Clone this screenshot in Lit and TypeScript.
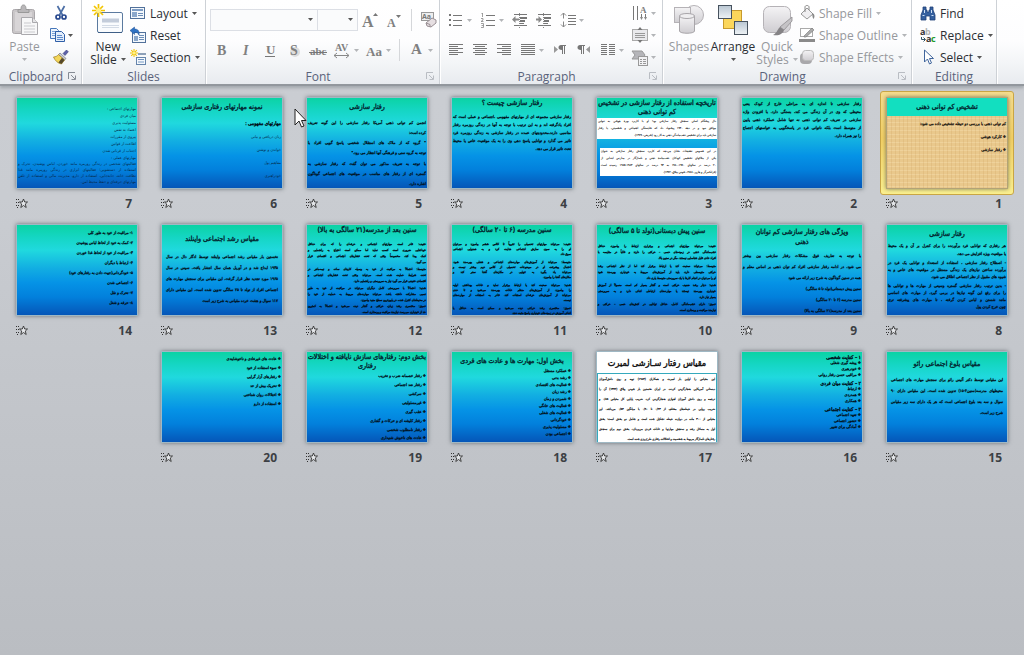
import { LitElement, html, svg, css, nothing, TemplateResult } from "lit";
import { customElement, property } from "lit/decorators.js";

interface Block {
  cls: string;
  lines: string[];
}
interface Slide {
  n: number;
  look?: string;
  blocks: Block[];
}

/* Class words: title / body, hN = line height, tN = space above,
   fill = every line but the last spans the slide. */
const SLIDES: Slide[] = [
  { n: 1, look: "sand", blocks: [
    { cls: "title banner h18", lines: ["تشخیص کم توانی ذهنی"] },
    { cls: "body bold t1 h13", lines: ["کم توانی ذهنی با بررسی دو حیطه تشخیص داده می شود:", "❖ کارکرد هوشی", "❖ رفتار سازشی"] },
  ] },
  { n: 2, blocks: [
    { cls: "body bold t2 h8 fill", lines: ["رفتار سازشی تا اندازه ای به مراحلی خارج از کودک یعنی", "محیطی که وی در آن زندگی می کند، بستگی دارد. با افزودن واژه", "سازشی در تعریف کم توانی ذهنی نه تنها شامل عملکرد ذهنی پایین", "از متوسط است بلکه ناتوانی فرد در پاسخگویی به خواستهای اجتماع", "را نیز همراه دارد."] },
  ] },
  { n: 3, blocks: [
    { cls: "title t1 h9", lines: ["تاریخچه استفاده از رفتار سازشی در تشخیص", "کم توانی ذهنی"] },
    { cls: "body paper t1 h7 fill", lines: ["دال پیشگام اصلی سنجش رفتار سازشی بود؛ او با کاربرد بهرۀ هوشی به تنهایی", "موافق نبود و در دهۀ ۱۹۴۰ پیشنهاد داد که شایستگی اجتماعی و شخصیتی، یا رفتار", "سازشی باید برای تشخیص عقب‌ماندگی ذهنی به کار رود (شریفی، ۱۳۷۹)."] },
    { cls: "body paper inset t9 h7 fill", lines: ["در این خصوص تحقیقات نشان می‌دهد که کاربرد سنجش رفتار سازشی به عنوان", "یکی از ملاکهای تشخیص کودکان عقب‌ماندۀ ذهنی و ناسازگار در مدارس ابتدایی از", "۲۰ درصد در سالهای ۱۹۷۰-۱۹۸۰ به ۹۴ درصد در سالهای ۱۹۸۴-۱۹۸۵ رسیده است", "(فرانکنبرگر و هارپر، ۱۹۸۸، شهنی ییلاق، ۱۳۷۲)."] },
  ] },
  { n: 4, blocks: [
    { cls: "title h10", lines: ["رفتار سازشی چیست ؟"] },
    { cls: "body bold t5 h8 fill", lines: ["رفتار سازشی مجموعه ای از مهارتهای مفهومی ،اجتماعی و عملی است که", "افراد یادگرفته اند و به این ترتیب با توجه به آنها در زندگی روزمره رفتار", "مناسبی دارند.محدودیتهای عمده در رفتار سازشی به زندگی روزمره فرد", "تاثیر می گذارد و توانایی پاسخ دهی وی را به یک موقعیت خاص یا محیط", "تحت تاثیر قرار می دهد."] },
  ] },
  { n: 5, blocks: [
    { cls: "title t4 h10", lines: ["رفتار سازشی"] },
    { cls: "body bold t6 h10 fill", lines: ["انجمن کم توانی ذهنی آمریکا رفتار سازشی را این گونه تعریف", "کرده است:"] },
    { cls: "body bold h10 fill", lines: ["\" گروه که از ملاک های استقلال شخصی پاسخ گویی افراد با", "توجه به گروه سنی و فرهنگی آنها انتظار می رود.\""] },
    { cls: "body bold t1 h10 fill", lines: ["با توجه به تعریف مذکور می توان گفت که رفتار سازشی به", "گستره ای از رفتار های مناسب در موقعیت های اجتماعی گوناگون", "اشاره دارد."] },
  ] },
  { n: 6, blocks: [
    { cls: "title t4 h10", lines: ["نمونه مهارتهای رفتاری سازشی"] },
    { cls: "body lead t5 h13", lines: ["مهارتهای مفهومی :"] },
    { cls: "body thin h13", lines: ["زبان دریافتی و بیانی", "خواندن و نوشتن", "مفاهیم پول", "خودراهبری"] },
  ] },
  { n: 7, blocks: [
    { cls: "body thin t7 h7", lines: ["مهارتهای اجتماعی :", "میان فردی", "مسئولیت پذیری", "اعتماد به نفس", "پیروی از مقررات", "اطاعت از قوانین", "اجتناب از قربانی شدن", "مهارتهای عملی :"] },
    { cls: "body thin h6 fill", lines: ["فعالیتهای شخصی در زندگی روزمره مانند خوردن، لباس پوشیدن، تحرک و", "استفاده از دستشویی؛ فعالیتهای ابزاری در زندگی روزمره مانند غذا", "نظافت خانه، جابه‌جایی، استفاده از دارو، مدیریت مالی و استفاده از تلفن", "مهارتهای حرفه‌ای و حفظ محیط امن."] },
  ] },
  { n: 8, blocks: [
    { cls: "title t4 h10", lines: ["رفتار سازشی"] },
    { cls: "body bold t3 h8 fill", lines: ["هر رفتاری که توانایی فرد برآورنده را برای کنترل بر آن و یک محیط", "یا موقعیت ویژه افزایش می دهد."] },
    { cls: "body bold t1 h7 fill", lines: ["- اصطلاح رفتار سازشی ، استفاده از استعداد و توانایی یک فرد در", "برآورده ساختن نیازهای یک زندگی مستقل در موقعیت های خاص و به", "شیوه های مقبول از نظر اجتماعی اطلاق می شود."] },
    { cls: "body bold t2 h7 fill", lines: ["- بدین ترتیب رفتار سازشی گستره وسیعی از مهارت ها و توانایی ها", "را برای رفع این گونه نیازها در برمی گیرد. از مهارت های اساسی", "مانند شستن و لباس کردن گرفته ، تا مهارت های پیشرفته تری", "چون خرج کردن پول"] },
  ] },
  { n: 9, blocks: [
    { cls: "title t2 h10", lines: ["ویژگی های رفتار سازشی کم توانان", "ذهنی"] },
    { cls: "body bold t3 h11 fill", lines: ["با توجه به تعاریف فوق مشکلات رفتار سازشی بین بیشتر", "می شود. در ادامه رفتار سازشی افراد کم توان ذهنی بر اساس معلم و", "همه در سنین گوناگون به شرح زیر ارائه می شود"] },
    { cls: "body bold h11", lines: ["سنین پیش دبستانی(تولد تا ۵ سالگی)", "سنین مدرسه (۶ تا ۲۰ سالگی)", "سنین بعد از مدرسه(۲۱ سالگی به بالا)"] },
  ] },
  { n: 10, blocks: [
    { cls: "title t1 h10", lines: ["سنین پیش دبستانی(تولد تا ۵ سالگی)"] },
    { cls: "body dense t7 h6 fill", lines: ["خفیف: می‌تواند مهارتهای اجتماعی و برقراری ارتباط را بیاموزد، حداقل", "عقب‌ماندگی ذهنی در زمینه‌های حسی – حرکتی را دارند و غالباً در مقایسه با", "افراد عادی قابل شناسایی نیستند. مگر در سنین بالا."] },
    { cls: "body dense t2 h6 fill", lines: ["متوسط: می‌تواند صحبت کند یا ارتباط برقرار کند اما از نظر اجتماعی رشد", "حرکتی متوسطی دارد، باید از آموزش‌های مربوط به خودیاری بهره‌مند شود", "او را می‌توان در انجام کارها با یک سرپرستی متوسط یاری داد."] },
    { cls: "body dense t1 h6 fill", lines: ["شدید: دچار رشد ضعیف حرکتی است و گفتار بسیار کم است. معمولاً از آموزش", "خودیاری بهره‌مند نیستند یا مهارت‌های ارتباطی اندکی دارد و به سرپرستی", "بسیار نیاز دارد."] },
    { cls: "body dense t1 h6 fill", lines: ["عمیق: دارای عقب‌ماندگی کامل، حداقل توانایی در کنش‌های حسی – حرکتی و", "نیازمند مراقبت و پرستاری است."] },
  ] },
  { n: 11, blocks: [
    { cls: "title h10", lines: ["سنین مدرسه (۶ تا ۲۰ سالگی)"] },
    { cls: "body dense t7 h5 fill", lines: ["خفیف: می‌تواند مهارتهای تحصیلی را تقریباً تا کلاس ششم بیاموزد و می‌توان", "او را به سوی سازش اجتماعی هدایت کرد و به همنوایی اجتماعی", "سوق داد."] },
    { cls: "body dense t3 h5 fill", lines: ["متوسط: می‌تواند از آموزش‌های مهارت‌های اجتماعی و شغلی بهره‌مند شود.", "احتمال پیشرفت او در موضوعات تحصیلی از کلاس دوم بیشتر نیست و", "می‌تواند یاد بگیرد به تنهایی در مکان‌های آشنا سفر کند و", "مکان‌های آشنا را بیاموزد."] },
    { cls: "body dense t3 h5 fill", lines: ["شدید: می‌تواند صحبت کند یا ارتباط برقرار نماید و عادات بهداشتی اولیه", "را بیاموزد. از آموزش‌های منظم عادات بهره‌مند می‌شود و تا حدی", "می‌تواند از آموزش‌های حرفه‌ای استفاده کند. قادر به استفاده از مهارت‌های", "نیست."] },
    { cls: "body dense t3 h5 fill", lines: ["عمیق: مختصری رشد حرکتی دیده می‌شود و ممکن است به حداقل یا", "اندکی آموزش در زمینه‌های خودیاری پاسخ مثبت دهد."] },
  ] },
  { n: 12, blocks: [
    { cls: "title h10", lines: ["سنین بعد از مدرسه(۲۱ سالگی به بالا)"] },
    { cls: "body dense t6 h6 fill", lines: ["خفیف: قادر است مهارتهای اجتماعی و حرفه‌ای را که برای حداقل", "خودکفایی ضروری است کسب نماید اما ممکن است احتیاج به راهنمایی و", "کمک پیدا کند، مخصوصاً وقتی که تحت فشارهای اجتماعی و اقتصادی قرار", "می گیرد."] },
    { cls: "body dense t1 h6 fill", lines: ["متوسط: احتمالاً به مراقبت از خود به وسیله کارهای ساده و نیمه‌ماهر در", "تحت شرایط حمایت شده است. می‌تواند وقتی تحت فشارهای اجتماعی و", "اقتصادی خفیفی قرار می گیرد نیاز به سرپرستی و راهنمایی دارد."] },
    { cls: "body dense t1 h6 fill", lines: ["شدید: احتمالاً با سرپرستی کامل دیگران می‌تواند در مراقبت از خود به طور", "نسبی مشارکت داشته باشد. می‌تواند مهارت‌های مربوط به حمایت از خود را", "در محیط‌های کنترل شده، در پایین‌ترین سطح مفید بیاموزد."] },
    { cls: "body dense h6 fill", lines: ["عمیق: مختصری رشد زبان، حرکتی و گفتار دیده می‌شود و احتمالاً به کمترین", "حد از خودیاری می‌رسد. نیازمند مراقبت و پرستاری است."] },
  ] },
  { n: 13, blocks: [
    { cls: "title t9 h10", lines: ["مقیاس رشد اجتماعی واینلند"] },
    { cls: "body bold narrow t7 h11 fill", lines: ["نخستین بار مقیاس رشد اجتماعی واینلند توسط ادگار دال در سال", "۱۹۳۵ ابداع شد و در آوریل همان سال انتشار یافت. سپس در سال", "۱۹۶۵ مورد تجدید نظر قرار گرفت. این مقیاس برای سنجش مهارت های", "اجتماعی افراد از تولد تا ۲۵ سالگی تدوین شده است. این مقیاس دارای", "۱۱۷ سوال و هشت خرده مقیاس به شرح زیر است"] },
  ] },
  { n: 14, blocks: [
    { cls: "body bold narrow t3 h10", lines: ["۱- مراقبت از خود به طور کلی", "۲- کمک به خود از لحاظ لباس پوشیدن", "۳- مراقبت از خود از لحاظ غذا خوردن", "۴- ارتباط با دیگران", "۵- خودگردانی(جهت دادن به رفتارهای خود)", "۶- اجتماعی شدن", "۷- تحرک و نقل", "۸- حرفه و شغل"] },
  ] },
  { n: 15, blocks: [
    { cls: "title t7 h10", lines: ["مقیاس بلوغ اجتماعی رائو"] },
    { cls: "body bold narrow t5 h11 fill", lines: ["این مقیاس توسط دکتر آلیس رائو برای سنجش مهارت های اجتماعی", "محیطهای مدرسه(سنین۴-۱۵) تدوین شده است. این مقیاس دارای ۹۰", "سوال و سه بعد بلوغ اجتماعی است که هر یک دارای سه زیر مقیاس", "شرح زیر است."] },
  ] },
  { n: 16, blocks: [
    { cls: "body lead t2 h6", lines: ["۱ – کفایت شخصی"] },
    { cls: "body bold h6", lines: ["❖ پیشه گیری شغلی", "❖ خودرهبری", "❖ مراقبی حسن رفتار روانی"] },
    { cls: "body lead t2 h6", lines: ["۲ – کفایت میان فردی"] },
    { cls: "body bold h6", lines: ["❖ ارتباط", "❖ همدردی", "❖ همکاری"] },
    { cls: "body lead t2 h6", lines: ["۳ – کفایت اجتماعی"] },
    { cls: "body bold h6", lines: ["❖ تعهد اجتماعی", "❖ حضور اجتماعی", "❖ آمادگی برای تغییر"] },
  ] },
  { n: 17, look: "white", blocks: [
    { cls: "title huge h18 t2", lines: ["مقیاس رفتار سـازشی لمبرت"] },
    { cls: "body framed t1 h10 fill", lines: ["این مقیاس را اولین بار لمبرت و همکاران (۱۹۸۴) تهیه و روی دانش‌آموزان", "دبستانی آمریکایی هنجارگزینی کردند. در ایران نخستین بار شهنی ییلاق (۱۳۷۲) آن را", "ترجمه و روی دانش آموزان اهوازی هنجارگزینی کرد. ضریب پایایی کل مقیاس ۰/۸۵ و", "ضریب روایی در حیطه‌های مختلف از ۰/۲۳ تا ۰/۹۰ با میانگین ۰/۵۴ می‌باشد. این", "مقیاس از ۳۰۰ ماده در دوازده حیطه تشکیل شده است و شامل دو بخش است: بخش", "اول به مسائل رشد و سنجش مهارتها و عادات فردی می‌پردازد. بخش دوم برای سنجش", "رفتارهای ناسازگار مربوط به شخصیت و اختلالات رفتاری طرح‌ریزی شده است."] },
  ] },
  { n: 18, blocks: [
    { cls: "title t4 h10", lines: ["بخش اول: مهارت ها و عادت های فردی"] },
    { cls: "body bold t1 h7", lines: ["❖ عملکرد مستقل", "❖ رشد بدنی", "❖ فعالیت های اقتصادی", "❖ رشد زبان", "❖ شمردن و زمان", "❖ فعالیت های خانگی", "❖ فعالیت های شغلی", "❖ خودگردانی", "❖ مسئولیت پذیری", "❖ اجتماعی بودن"] },
  ] },
  { n: 19, blocks: [
    { cls: "title t1 h9", lines: ["بخش دوم: رفتارهای سازش نایافته و اختلالات", "رفتاری"] },
    { cls: "body bold h9", lines: ["❖ رفتار خصمانه ضرب و تخریب", "❖ رفتار ضد اجتماعی", "❖ سرکشی", "❖ غیرمسئولیتی", "❖ عقب گیری", "❖ رفتار کلیشه ای و حرکات و گفتاری", "❖ رفتار نامطلوب شخصی"] },
    { cls: "body bold h7", lines: ["❖ عادت های ناخوش شنیداری"] },
  ] },
  { n: 20, blocks: [
    { cls: "body bold t2 h9", lines: ["❖ عادت های غیرعادی و ناخوشایندی", "❖ سوء استفاده از خود", "❖ رفتارهای آزار گرایی", "❖ تحریک بیش از حد", "❖ اختلالات روان شناختی", "❖ استفاده از دارو"] },
  ] },
];

const arrow = (dark = false) =>
  svg`<svg class="arrow ${dark ? "dark" : ""}" width="5" height="3" viewBox="0 0 5 3" aria-hidden="true"><path d="M0 0h5L2.500 3z" fill="currentColor"/></svg>`;

const icon = (w: number, h: number, body: unknown) =>
  html`<svg class="ico" width=${w} height=${h} viewBox="0 0 ${w} ${h}" aria-hidden="true">${body}</svg>`;

const rules = (rows: [number, number, number][], color = "#777") =>
  rows.map(([x, y, w]) => svg`<rect x=${x} y=${y} width=${w} height="1" fill=${color}/>`);

const pasteIcon = icon(30, 32, svg`
  <rect x="2.500" y="5.500" width="22" height="24" rx="2" fill="#c9c6c8" stroke="#aaa7aa"/>
  <rect x="5" y="8" width="17" height="19" fill="#d8d5d7"/>
  <path d="M8 8.500V5.500h3C11 2 12 1 13.500 1S16 2 16 5.500h3v3z" fill="#b9b7b9" stroke="#999"/>
  <path d="M11.500 13.500h11l5 5v12h-16z" fill="#f7f7f8" stroke="#aaa9ad"/>
  <path d="M22.500 13.500v5h5" fill="#e4e4e6" stroke="#aaa9ad"/>
  <path d="M14 19h7M14 22h11M14 25h11M14 28h11" stroke="#c9c9cd"/>`);
const cutIcon = icon(16, 16, svg`
  <path d="M4.500 1 9.500 10M11.500 1 6.500 10" stroke="#4b6ea5" stroke-width="1.700" fill="none"/>
  <circle cx="5" cy="12" r="2" fill="none" stroke="#26478d" stroke-width="1.700"/>
  <circle cx="11" cy="12" r="2" fill="none" stroke="#26478d" stroke-width="1.700"/>`);
const copyIcon = icon(16, 16, svg`
  <path d="M1.500 1.500h6l2 2v8h-8z" fill="#eef4fc" stroke="#4677ba"/>
  <path d="M3 4.500h4M3 6.500h5M3 8.500h5" stroke="#7ba2d6"/>
  <path d="M6.500 4.500h6l3 3v7h-9z" fill="#e3edfa" stroke="#2f5fa8"/>
  <path d="M8 8.500h5M8 10.500h6M8 12.500h6" stroke="#5e8acb"/>`);
const brushIcon = icon(16, 16, svg`
  <path d="m10 4.500 3.500-3.500 1.800 1.800L12 6.500z" fill="#5c60a8" stroke="#343a78" stroke-width=".6"/>
  <path d="m7 4 6 5.500-1.500 1.500L5.500 5.500z" fill="#c9ccd6" stroke="#73767f" stroke-width=".7"/>
  <path d="M5.500 5.500 11.500 11 8.500 15C5 14.500 2 11.500.500 8c2 0 4-1 5-2.500z" fill="#f3d65a" stroke="#a4862c" stroke-width=".8"/>
  <path d="M8.500 15 11.500 11 9 8.800 5.500 13.500z" fill="#55482a"/>`);
const burst = svg`<path d="M6.500 0v13M0 6.500h13M2 2l9 9M11 2l-9 9" stroke="#f2c400" stroke-width="1.700"/><circle cx="6.500" cy="6.500" r="2.500" fill="#fff08a"/>`;
const newSlideIcon = icon(32, 32, svg`
  <rect x="5.500" y="8.500" width="25" height="20" rx="1.500" fill="#fafcfe" stroke="#5b7a9f"/>
  <path d="M10 14.500h17v4H10z" fill="#c3ccda"/>
  <path d="M10 21.500h17M10 23.500h17" stroke="#d3dbe6"/>
  <path d="M6 28.500h24" stroke="#3f5f87"/>${burst}`);
const layoutIcon = icon(16, 16, svg`
  <rect x=".500" y="2.500" width="14" height="11" fill="#f4f8fc" stroke="#51719b"/>
  <rect x="2" y="4" width="11" height="2" fill="#7d9cc4"/>
  <rect x="2" y="7" width="5" height="5" fill="#8aa7cb"/>
  <path d="M8 8.500h5M8 10.500h5" stroke="#6c8db7"/>`);
const resetIcon = icon(16, 16, svg`
  <rect x="2.500" y="5.500" width="13" height="10" fill="#f4f8fc" stroke="#51719b"/>
  <rect x="4" y="9" width="4" height="5" fill="#8aa7cb"/>
  <path d="M9 8.500h5M9 10.500h5M9 12.500h5" stroke="#6c8db7"/>
  <path d="M0 3.500 4.500 0v2C8 2 9.500 4 9 8 8 6 7 5.300 4.500 5.300V7.500z" fill="#2f73c4" stroke="#1d4f94" stroke-width=".5"/>`);
const sectionIcon = icon(16, 16, svg`
  <g transform="scale(.62)">${burst}</g>
  <rect x="8" y="4" width="8" height="2" fill="#8da0b8"/>
  <rect x="6.500" y="8.500" width="9" height="7" fill="#f4f8fc" stroke="#6584ab"/>
  <rect x="8" y="10" width="6" height="1" fill="#6f93c0"/><rect x="8" y="12" width="6" height="2" fill="#b5c9e0"/>`);

const growIcon = icon(18, 18, svg`<text x="1" y="16" class="serif" font-size="16">A</text><path d="M12 5h5l-2.500-3z" fill="#777"/>`);
const shrinkIcon = icon(18, 18, svg`<text x="2" y="16" class="serif" font-size="12">A</text><path d="M11 4h5l-2.500 3z" fill="#777"/>`);
const eraseIcon = icon(18, 18, svg`
  <rect x="1.500" y="1.500" width="12" height="8" fill="#eee" stroke="#999"/>
  <text x="2" y="8" font-size="7" font-weight="700" fill="#777">Aa</text>
  <path d="m6 12 6-5 4 2v3l-5 4-4-1z" fill="#e6dfe2" stroke="#998f94"/><path d="m6 12 4 1.500v2.500" fill="none" stroke="#998f94"/>`);
const boldIcon = icon(16, 18, svg`<text x="3" y="14" class="serif" font-size="14">B</text>`);
const italicIcon = icon(16, 18, svg`<text x="5" y="14" class="serif" font-style="italic" font-size="14">I</text>`);
const underIcon = icon(16, 18, svg`<text x="4" y="13" class="serif" font-size="13">U</text><path d="M3 15.500h10" stroke="#777"/>`);
const shadowIcon = icon(16, 18, svg`<circle cx="9" cy="11" r="5" fill="#ddd"/><text x="4" y="14" class="serif" font-size="14">S</text>`);
const strikeIcon = icon(20, 18, svg`<text x="2" y="14" class="serif" font-size="11">abc</text><path d="M1 11.500h18" stroke="#777"/>`);
const spacingIcon = icon(18, 18, svg`<text x="2" y="10" class="serif" font-size="10">AV</text><path d="M1 14.500h15M4 12l-3 2.500L4 17M13 12l3 2.500-3 2.500" stroke="#888" fill="none"/>`);
const caseIcon = icon(18, 18, svg`<text x="1" y="15" class="serif" font-size="13">Aa</text>`);
const colorIcon = icon(16, 18, svg`<text x="2" y="13" class="serif" font-size="15">A</text>`);

const bulletIcon = icon(16, 16, svg`${rules([[5, 3, 9], [5, 8, 9], [5, 13, 9]])}
  <g fill="#777"><rect x="1" y="2" width="2" height="2"/><rect x="1" y="7" width="2" height="2"/><rect x="1" y="12" width="2" height="2"/></g>`);
const numberIcon = icon(16, 16, svg`${rules([[6, 3, 9], [6, 8, 9], [6, 13, 9]])}
  <path d="M2.500 1v4M1.500 1.500h1M1 6.500h2v1.500l-2 1.500h2.500M1 11.500h2.500v4H1M1.500 13.500h2" stroke="#888" fill="none" stroke-width=".8"/>`);
const indent = (d: string) => icon(16, 16, svg`${rules([[2, 2, 13], [8, 5, 7], [8, 6, 7], [8, 8, 5], [8, 9, 5], [8, 11, 4], [2, 13, 13]])}
  <path d="M7.500 1v15" stroke="#888" stroke-dasharray="1 1"/><path d=${d} fill="#888"/>`);
const outIcon = indent("M0 7.500 3.500 4v2.500H7v2H3.500V11z");
const inIcon = indent("M6 7.500 2.500 4v2.500H0v2h2.500V11z");
const lineGapIcon = icon(16, 16, svg`${rules([[8, 3, 8], [8, 6, 8], [8, 9, 8], [8, 12, 8]])}
  <path d="M3.500 1v5.500M3.500 9.500V15M1 3.500 3.500 1 6 3.500M1 12.500 3.500 15 6 12.500" stroke="#888" fill="none"/>`);
const lines = (rows: [number, number][]) => icon(16, 14, rules(rows.map(([x, w], i) => [x, 1 + i * 2, w])));
const leftIcon = lines([[1, 14], [1, 9], [1, 14], [1, 9], [1, 14], [1, 9]]);
const midIcon = lines([[1, 14], [3, 10], [1, 14], [3, 10], [1, 14], [3, 10]]);
const rightIcon = lines([[1, 14], [6, 9], [1, 14], [6, 9], [1, 14], [6, 9]]);
const fullIcon = lines([[1, 14], [1, 14], [1, 14], [1, 14], [1, 14], [1, 14]]);
const columnsIcon = icon(16, 14, [0, 1, 2, 3, 4, 5].map((i) => rules([[1, 1 + i * 2, 6], [9, 1 + i * 2, 6]])));
const pilcrow = svg`<path d="M6 2h7v1h-1v8h-1V3h-1v8H9V7C6.500 7 5.500 6 5.500 4.500S6.500 2 8 2z" fill="#777"/>`;
const ltrIcon = icon(16, 14, svg`<path d="M2 3v7l4-3.500z" fill="#999"/><g transform="translate(1 0)">${pilcrow}</g>`);
const rtlIcon = icon(16, 14, svg`<g transform="translate(-4 0)">${pilcrow}</g><path d="M14 3v7l-4-3.500z" fill="#999"/>`);
const textDirIcon = icon(16, 16, svg`<path d="M1.500 1v14M5.500 1v14M9.500 9v5M13.500 9v5" stroke="#777"/><text x="8" y="8" class="serif" font-size="9">A</text><path d="M8 12h3l-1.500 3zM12 12h3l-1.500 3z" fill="#888"/>`);
const alignTextIcon = icon(16, 16, svg`<rect x=".500" y="2.500" width="15" height="11" fill="#e9e9ec" stroke="#aaa"/>${rules([[3, 6, 10], [3, 8, 10], [3, 10, 10]], "#999")}<path d="M8 0 5.500 3h5zM8 16l-2.500-3h5z" fill="#777"/>`);
const smartIcon = icon(16, 17, svg`<path d="M0 2h10l3 4-3 4H0l3-4z" fill="#b5b5b9" stroke="#999"/><rect x="6.500" y="7.500" width="9" height="9" fill="#f2f2f4" stroke="#999"/>${rules([[8, 10, 2], [11, 10, 3], [8, 12, 2], [11, 12, 3], [8, 14, 2], [11, 14, 3]], "#999")}`);

const grads = svg`<defs>
  <linearGradient id="g" x1="0" y1="0" x2="0" y2="1"><stop offset="0" stop-color="#f4f3f5"/><stop offset="1" stop-color="#cfcdd1"/></linearGradient>
  <linearGradient id="b" x1="0" y1="0" x2="0" y2="1"><stop offset="0" stop-color="#b9c6d2"/><stop offset="1" stop-color="#eef2f5"/></linearGradient></defs>`;
const shapesIcon = icon(32, 32, svg`${grads}
  <circle cx="21" cy="11" r="9.500" fill="url(#g)" stroke="#b5b2b6"/>
  <rect x="1.500" y="3.500" width="16" height="15" fill="url(#g)" stroke="#b5b2b6"/>
  <path d="M6.500 12v15c0 3 15 3 15 0V12z" fill="url(#g)" stroke="#a9a6aa"/><ellipse cx="14" cy="12" rx="7.500" ry="2.500" fill="#efeef0" stroke="#a9a6aa"/>`);
const arrangeIcon = icon(32, 32, svg`${grads}
  <rect x="6.500" y="6.500" width="18" height="18" fill="#fbd65b" stroke="#c79a2d"/>
  <rect x="1.500" y="1.500" width="13" height="13" fill="url(#b)" stroke="#47525e"/>
  <rect x="17.500" y="17.500" width="13" height="13" fill="url(#b)" stroke="#47525e"/>`);
const quickIcon = icon(32, 32, svg`${grads}
  <rect x="2.500" y="2.500" width="27" height="26" rx="6" fill="url(#g)" stroke="#b5b2b6"/>
  <path d="M31 13v4L23 26l-4-3z" fill="#c5c3c6" stroke="#8f8d90" stroke-width=".8"/>
  <path d="M19 23l4 3c-1 4-5 6-11 5 4-2 4-5 7-8z" fill="#858386"/>`);
const fillIcon = icon(16, 16, svg`<path d="m2 9 6-6 6 6-6 5z" fill="#f0eff1" stroke="#999"/><path d="M6 7V2c0-2 4-2 4 0v3" fill="none" stroke="#888"/><path d="M13 8c3 1 3 4 1.500 6-1-1-1-3-1.500-6z" fill="#888"/>`);
const outlineIcon = icon(16, 16, svg`<rect x="1.500" y="1.500" width="12" height="8" fill="#fff" stroke="#aaa"/><path d="m5 9 8-8 2 2-8 7H5z" fill="#aaa" stroke="#777" stroke-width=".6"/><rect x="0" y="12" width="16" height="3" fill="#8a8a8a"/>`);
const effectsIcon = icon(16, 16, svg`${grads}<rect x="1" y="4" width="12" height="11" rx="4" fill="#a9a8ab"/><rect x="3.500" y="1.500" width="11" height="10" rx="3" fill="url(#g)" stroke="#bbb"/>`);
const findIcon = icon(16, 16, svg`
  <path d="M3 2h3v3h1v2h2V5h1V2h3v3l2 5v5h-5v-4H6v4H1v-5l2-5z" fill="#35609f" stroke="#1f3f76" stroke-width=".8"/>
  <path d="M2.500 10.500h2M11.500 10.500h2M4.500 5v3M11.500 5v3" stroke="#cfe0f5"/>`);
const replaceIcon = icon(16, 18, svg`<g font-size="9" font-weight="700"><text x="0" y="9" fill="#333">a</text><text x="5" y="9" fill="#b5b5b5">b</text><text x="6" y="16" fill="#333">a</text><text x="11" y="16" fill="#1e9a2c">c</text></g><path d="M1.500 11v2.500H5M3.500 11.500l2 2-2 2" stroke="#356" fill="none"/>`);
const selectIcon = icon(16, 16, svg`<path d="M4.500 1v12l3-3 2 5 2-1-2-4.500h4z" fill="#fff" stroke="#40659c"/>`);
const starIcon = icon(12, 11, svg`<path d="M0 1.500h4M0 4.500h3M0 7.500h3M1 9.500h2" stroke="#333" stroke-dasharray="1 1"/><path d="m7.500 1 1.200 3H11.500L9.300 6l.9 3.500-2.700-2-2.700 2L5.700 6 3.500 4H6.300z" fill="#e4e6e9" stroke="#333" stroke-width=".9"/>`);
const launcherIcon = icon(9, 9, svg`<path d="M.500 7V.500H7M3 3l4 4M7.500 3.500v4h-4" stroke="currentColor" fill="none"/>`);

@customElement("slide-thumb")
export class SlideThumb extends LitElement {
  @property({ attribute: false }) slide!: Slide;
  @property({ type: Boolean }) selected = false;

  static styles = css`
    :host { display: block; }
    .frame {
      display: block; width: 100%; padding: 5px; border: 1px solid transparent; border-radius: 3px;
      background: none; font: inherit; color: inherit; text-align: inherit;
    }
    .frame.on { border-color: #c9a646; background: linear-gradient(#f6dd8e, #f3cf63 45%, #fbf08f); }
    .page {
      display: flow-root; height: 90px; overflow: hidden; direction: rtl; white-space: nowrap;
      border: 1px solid #9fb8c4; box-shadow: 0 0 4px rgba(60, 66, 74, .65);
      color: #02141f; -webkit-text-stroke: 0 currentColor;
      background: linear-gradient(#0bd3a4, #15d6c4 14%, #20d9de 28%, #12aee2 48%, #0593e6 64%, #0280dc 80%, #0556b8);
    }
    .page.sand {
      color: #2a2418; border-color: #b2a377;
      background: repeating-linear-gradient(90deg, rgba(190, 140, 70, .16) 0 1px, transparent 1px 4px),
        repeating-linear-gradient(rgba(255, 240, 200, .25) 0 1px, transparent 1px 4px), #e9c88c;
    }
    .page.white { color: #111; background: #fff; }
    .block, .line { display: block; }
    .title { font-size: 7px; text-align: center; color: #032a33; -webkit-text-stroke-width: .4px; }
    .huge { font-size: 9px; color: #111; }
    .banner { background: #12dfc0; }
    .body { font-size: 4px; padding-inline: 1px; }
    .bold { -webkit-text-stroke-width: .3px; }
    .dense { font-size: 3px; -webkit-text-stroke-width: .4px; }
    .thin { color: #04294a; }
    .lead { font-size: 5px; -webkit-text-stroke-width: .4px; }
    .paper { background: #fff; color: #222; font-size: 3px; -webkit-text-stroke-width: .1px; }
    .inset { margin-left: 3px; }
    .framed {
      border-top: 1px solid #35a9bd; border-inline: 1px solid #35a9bd;
      font-size: 3px; -webkit-text-stroke-width: .2px;
    }
    .narrow { padding-inline: 4px; }
    .fill .line:not(:last-child) { text-align-last: justify; }
    .h5 { line-height: 5px; } .h6 { line-height: 6px; } .h7 { line-height: 7px; } .h8 { line-height: 8px; }
    .h9 { line-height: 9px; } .h10 { line-height: 10px; } .h11 { line-height: 11px; } .h13 { line-height: 13px; }
    .h18 { line-height: 18px; }
    .t1 { margin-top: 1px; } .t2 { margin-top: 2px; } .t3 { margin-top: 3px; } .t4 { margin-top: 4px; }
    .t5 { margin-top: 5px; } .t6 { margin-top: 6px; } .t7 { margin-top: 7px; } .t9 { margin-top: 9px; }
    .foot { display: flex; justify-content: space-between; align-items: center; height: 17px; padding: 0 12px 6px 6px; }
    .num { font: 700 12px/16px "Open Sans", sans-serif; color: #3c3f44; }
  `;

  render() {
    const s = this.slide;
    return html`
      <button class="frame ${this.selected ? "on" : ""}" aria-label="${s.n}" aria-pressed=${this.selected}>
        <span class="page ${s.look ?? ""}">
          ${s.blocks.map((b) => html`<span class="block ${b.cls}">${b.lines.map((l) => html`<span class="line">${l}</span>`)}</span>`)}
        </span>
      </button>
      <div class="foot">${starIcon}<span class="num">${s.n}</span></div>
    `;
  }
}

@customElement("app-root")
export class AppRoot extends LitElement {
  static styles = css`
    :host {
      display: flex; flex-direction: column; min-height: 100vh; position: relative;
      font: 12px/13px "Open Sans", "Noto Sans", sans-serif; color: #2b2e33;
      background: linear-gradient(#cbced3, #c9ccd1 30%, #babdc2);
    }
    .ribbon {
      display: flex; height: 84px; border-bottom: 2px solid #92979d;
      background: linear-gradient(#fff, #fdfdfe 50%, #f3f5f7 75%, #e8ebef);
      box-shadow: 0 2px 3px rgba(90, 96, 104, .35);
    }
    .group { display: flex; flex-direction: column; box-sizing: border-box; border-right: 1px solid #cdd1d6; box-shadow: 1px 0 #fff; }
    .clipboard { width: 82px; } .slides { width: 124px; } .font { width: 234px; }
    .paragraph { width: 223px; } .drawing { width: 249px; } .editing { width: 85px; }
    .tools { display: flex; flex: 1; padding: 2px 4px 0; }
    .caption { display: flex; align-items: center; height: 16px; padding: 0 4px; color: #59627a; }
    .caption .name { flex: 1; text-align: center; }
    .stack { display: flex; flex-direction: column; }
    .rows { display: flex; flex-direction: column; gap: 8px; padding-top: 7px; }
    .row { display: flex; align-items: center; height: 22px; }
    button {
      display: flex; align-items: center; padding: 0; border: 0; background: none;
      font: inherit; color: inherit; white-space: nowrap;
    }
    button:disabled { color: #96989c; }
    .small { height: 22px; gap: 4px; }
    .launch { padding: 2px 0; color: #858b94; }
    .launch:disabled { color: #b9bdc3; }
    .large { flex-direction: column; width: 44px; padding-top: 2px; }
    .large .ico { margin-bottom: 4px; }
    .large .text { display: flex; flex-direction: column; align-items: center; }
    .large .last { display: flex; align-items: center; gap: 4px; height: 13px; }
    .ico, .arrow { flex: none; }
    .ico { overflow: visible; }
    .arrow { color: #b3b5b8; }
    .arrow.dark { color: #555; }
    .tool { height: 22px; min-width: 24px; justify-content: center; gap: 3px; }
    .wide { min-width: 32px; }
    .combo { display: flex; position: relative; }
    .combo select {
      box-sizing: border-box; height: 22px; border: 1px solid #dcdfe5; border-radius: 0; background: #fafbfc;
      appearance: none; padding: 0; opacity: 1;
    }
    .face { width: 108px; } .size { width: 40px; }
    .combo .size { border-left: 0; }
    .combo .arrow { position: absolute; right: 5px; top: 9px; }
    .rule { width: 1px; height: 22px; margin: 0 5px; background: #d5d7da; }
    .serif { font-family: "Liberation Serif", serif; font-weight: 700; fill: #808080; }
    .apart { padding-left: 4px; }
    .sorter {
      display: grid; grid-template-columns: repeat(auto-fill, 134px); justify-content: start; column-gap: 11px;
      direction: rtl; margin: 0; padding: 5px 10px; list-style: none;
      font-family: "DejaVu Sans Condensed", "DejaVu Sans", sans-serif;
    }
    .sorter li { direction: ltr; }
    .pointer { position: absolute; left: 294px; top: 108px; }
  `;

  private small(label: string, ico: TemplateResult, drop = true, off = false) {
    return html`<button class="small" ?disabled=${off}>${ico}<span>${label}</span>${drop ? arrow(!off) : nothing}</button>`;
  }

  private large(first: string, second: string, ico: TemplateResult, off = false) {
    return html`<button class="large" ?disabled=${off}>${ico}<span class="text"><span>${first}</span><span class="last">${second}${arrow(!off)}</span></span></button>`;
  }

  private tool(label: string, ico: TemplateResult, drop = false, off = true) {
    return html`<button class="tool ${drop ? "wide" : ""}" aria-label=${label} ?disabled=${off}>${ico}${drop ? arrow(!off) : nothing}</button>`;
  }

  private group(cls: string, name: string, body: TemplateResult, launcher: "on" | "off" | "none") {
    return html`<section class="group ${cls}" aria-label=${name}>
      <div class="tools">${body}</div>
      <div class="caption"><span class="name">${name}</span>${launcher === "none" ? nothing : html`<button class="launch" aria-label="${name} options" ?disabled=${launcher === "off"}>${launcherIcon}</button>`}</div>
    </section>`;
  }

  render() {
    return html`
      <header class="ribbon">
        ${this.group("clipboard", "Clipboard", html`
          ${this.large("Paste", "", pasteIcon, true)}
          <div class="stack">${this.tool("Cut", cutIcon, false, false)}${this.tool("Copy", copyIcon, true, false)}${this.tool("Format Painter", brushIcon, false, false)}</div>`, "on")}
        ${this.group("slides", "Slides", html`
          ${this.large("New", "Slide", newSlideIcon)}
          <div class="stack">${this.small("Layout", layoutIcon)}${this.small("Reset", resetIcon, false)}${this.small("Section", sectionIcon)}</div>`, "none")}
        ${this.group("font", "Font", html`
          <div class="rows">
            <div class="row">
              <label class="combo"><select class="face" aria-label="Font" disabled></select>${arrow(true)}</label>
              <label class="combo"><select class="size" aria-label="Font Size" disabled></select>${arrow(true)}</label>
              ${this.tool("Grow Font", growIcon)}${this.tool("Shrink Font", shrinkIcon)}
              <span class="rule"></span>${this.tool("Clear Formatting", eraseIcon)}
            </div>
            <div class="row">
              ${this.tool("Bold", boldIcon)}${this.tool("Italic", italicIcon)}${this.tool("Underline", underIcon)}${this.tool("Shadow", shadowIcon)}${this.tool("Strikethrough", strikeIcon)}
              ${this.tool("Character Spacing", spacingIcon, true)}${this.tool("Change Case", caseIcon, true)}
              <span class="rule"></span>${this.tool("Font Color", colorIcon, true)}
            </div>
          </div>`, "off")}
        ${this.group("paragraph", "Paragraph", html`
          <div class="rows">
            <div class="row">
              ${this.tool("Bullets", bulletIcon, true)}${this.tool("Numbering", numberIcon, true)}
              ${this.tool("Decrease List Level", outIcon)}${this.tool("Increase List Level", inIcon)}
              ${this.tool("Line Spacing", lineGapIcon, true)}
            </div>
            <div class="row">
              ${this.tool("Align Left", leftIcon)}${this.tool("Center", midIcon)}${this.tool("Align Right", rightIcon)}${this.tool("Justify", fullIcon, true)}
              ${this.tool("Left-to-Right", ltrIcon)}${this.tool("Right-to-Left", rtlIcon)}${this.tool("Columns", columnsIcon, true)}
            </div>
          </div>
          <div class="stack">${this.tool("Text Direction", textDirIcon, true)}${this.tool("Align Text", alignTextIcon, true)}${this.tool("Convert to SmartArt", smartIcon, true)}</div>`, "off")}
        ${this.group("drawing", "Drawing", html`
          ${this.large("Shapes", "", shapesIcon, true)}${this.large("Arrange", "", arrangeIcon)}${this.large("Quick", "Styles", quickIcon, true)}
          <div class="stack">${this.small("Shape Fill", fillIcon, true, true)}${this.small("Shape Outline", outlineIcon, true, true)}${this.small("Shape Effects", effectsIcon, true, true)}</div>`, "off")}
        ${this.group("editing", "Editing", html`
          <div class="stack apart">${this.small("Find", findIcon, false)}${this.small("Replace", replaceIcon)}${this.small("Select", selectIcon)}</div>`, "none")}
      </header>
      <ol class="sorter">
        ${SLIDES.map((s) => html`<li><slide-thumb .slide=${s} ?selected=${s.n === 1}></slide-thumb></li>`)}
      </ol>
      <svg class="pointer" width="13" height="20" viewBox="0 0 13 20" aria-hidden="true"><path d="M1 1v16l4-4 2.500 6 2.500-1-2.500-5.500H12z" fill="#fff" stroke="#222"/></svg>
    `;
  }
}
